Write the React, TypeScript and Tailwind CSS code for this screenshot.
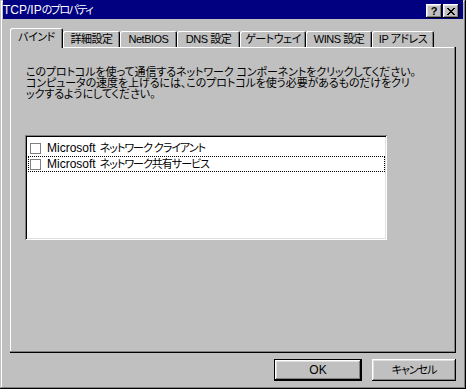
import React from 'react'

const FONT = "font-['Liberation_Sans','Noto_Sans_CJK_JP',sans-serif]"

const raised =
    'shadow-[inset_-1px_-1px_#000,inset_1px_1px_#fff,inset_-2px_-2px_#808080,inset_2px_2px_#dfdfdf]'

const tabs = [
    { label: '詳細設定', width: 'w-[57px]' },
    { label: 'NetBIOS', width: 'w-[57px]' },
    { label: 'DNS 設定', width: 'w-[63px]' },
    { label: 'ゲートウェイ', width: 'w-[66px]' },
    { label: 'WINS 設定', width: 'w-[66px]' },
    { label: 'IP アドレス', width: 'w-[62px]' },
]

const items = [
    { latin: 'Microsoft', jp: 'ネットワーク クライアント' },
    { latin: 'Microsoft', jp: 'ネットワーク共有サービス' },
]

const CloseGlyph = () => (
    <svg width="8" height="7" viewBox="0 0 8 7" shapeRendering="crispEdges">
        <path
            d="M0 0h2v1H0zM6 0h2v1H6zM1 1h2v1H1zM5 1h2v1H5zM2 2h4v1H2zM3 3h2v1H3zM2 4h4v1H2zM1 5h2v1H1zM5 5h2v1H5zM0 6h2v1H0zM6 6h2v1H6z"
            fill="#000"
        />
    </svg>
)

const TitleButton = ({ children }: { children: React.ReactNode }) => (
    <div className={`w-[16px] h-[14px] bg-[#c0c0c0] flex items-center justify-center ${raised}`}>
        {children}
    </div>
)

const TabStrip = () => (
    <div className="flex items-end h-[19px] relative z-10">
        <div className="w-[53px] h-[20px] self-start bg-[#c0c0c0] rounded-t-[2px] shadow-[inset_1px_1px_#fff,inset_-1px_0_#000,inset_-2px_0_#808080] flex items-center justify-center text-[11px] leading-none pb-[2px] tracking-[-0.5px] [font-feature-settings:'palt']">
            バインド
        </div>
        {tabs.map((tab) => (
            <div
                key={tab.label}
                className={`${tab.width} h-[16px] bg-[#c0c0c0] rounded-t-[2px] shadow-[inset_1px_1px_#fff,inset_-1px_0_#000,inset_-2px_0_#808080] flex items-center justify-center text-[11px] leading-none whitespace-nowrap tracking-[-0.5px] [font-feature-settings:'palt']`}
            >
                {tab.label}
            </div>
        ))}
    </div>
)

const BindingList = () => (
    <div className="ml-[15px] mt-[35px] w-[362px] h-[105px] bg-white shadow-[inset_1px_1px_#808080,inset_-1px_-1px_#fff,inset_2px_2px_#000,inset_-2px_-2px_#dfdfdf] pt-[5px] pl-[3px]">
        {items.map((item, i) => (
            <div
                key={item.jp}
                className={`w-[357px] h-[16px] flex items-center leading-none whitespace-nowrap ${
                    i === 1 ? 'outline-1 outline-dotted outline-black -outline-offset-1' : ''
                }`}
            >
                <span className="ml-[2px] w-[11px] h-[11px] border border-[#808080] bg-white" />
                <span className="ml-[6px] text-[12px]">{item.latin}</span>
                <span className="ml-[4px] text-[11px] tracking-[-1px] [font-feature-settings:'palt']">
                    {item.jp}
                </span>
            </div>
        ))}
    </div>
)

export default function App() {
    return (
        <div
            className={`${FONT} w-[466px] h-[389px] bg-[#c0c0c0] text-black flex flex-col px-[3px] shadow-[inset_-1px_-1px_#000,inset_1px_1px_#c0c0c0,inset_-2px_-2px_#808080,inset_2px_2px_#fff]`}
        >
            <div className="h-[19px] bg-[#000080] flex items-end justify-between pb-[1px]">
                <span className="text-white leading-none pb-[1px] whitespace-nowrap">
                    <span className="text-[12px]">TCP/IP</span>
                    <span className="text-[11px] tracking-[-1.5px] [font-feature-settings:'palt']">のプロパティ</span>
                </span>
                <div className="flex gap-[1px] mr-[4px]">
                    <TitleButton>
                        <span className="text-[11px] font-bold leading-none">?</span>
                    </TitleButton>
                    <TitleButton>
                        <CloseGlyph />
                    </TitleButton>
                </div>
            </div>

            <div className="pl-[7px] pr-[7px] pt-[9px]">
                <TabStrip />
                <div className="h-[306px] shadow-[inset_-1px_-1px_#000,inset_-2px_-2px_#808080,inset_1px_1px_#fff] pt-[20px]">
                    <div className="ml-[16px] text-[11px] leading-[11px] whitespace-nowrap tracking-[-0.1px] [font-feature-settings:'palt']">
                        <div>このプロトコルを使って通信するネットワーク コンポーネントをクリックしてください。</div>
                        <div>コンピュータの速度を上げるには、このプロトコルを使う必要があるものだけをクリ</div>
                        <div>ックするようにしてください。</div>
                    </div>
                    <BindingList />
                </div>
            </div>

            <div className="mt-[6px] flex justify-end gap-[10px] pr-[7px]">
                <div className="w-[88px] h-[22px] border border-black bg-[#c0c0c0] flex">
                    <div className={`flex-1 flex items-center justify-center text-[12px] leading-none ${raised}`}>
                        OK
                    </div>
                </div>
                <div className={`w-[84px] h-[22px] bg-[#c0c0c0] flex items-center justify-center text-[11px] leading-none tracking-[-1px] [font-feature-settings:'palt'] ${raised}`}>
                    キャンセル
                </div>
            </div>
        </div>
    )
}
